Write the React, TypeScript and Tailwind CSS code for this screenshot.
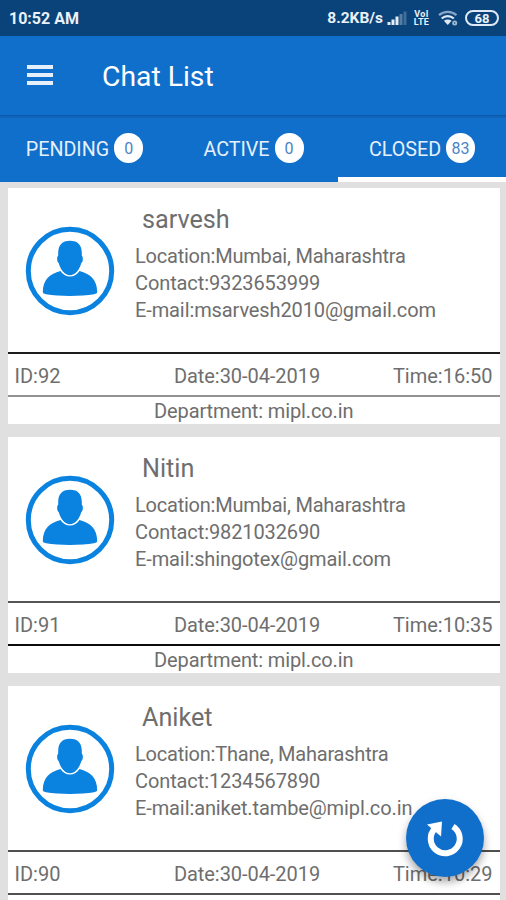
import { clsx } from "clsx";

interface Chat {
  id: number;
  name: string;
  location: string;
  contact: string;
  email: string;
  date: string;
  time: string;
  department: string;
  topRule: string;
  bottomRule: string;
}

const chats: Chat[] = [
  {
    id: 92,
    name: "sarvesh",
    location: "Mumbai, Maharashtra",
    contact: "9323653999",
    email: "msarvesh2010@gmail.com",
    date: "30-04-2019",
    time: "16:50",
    department: "mipl.co.in",
    topRule: "bg-[#1c1c1c]",
    bottomRule: "bg-[#929292]",
  },
  {
    id: 91,
    name: "Nitin",
    location: "Mumbai, Maharashtra",
    contact: "9821032690",
    email: "shingotex@gmail.com",
    date: "30-04-2019",
    time: "10:35",
    department: "mipl.co.in",
    topRule: "bg-[#555555]",
    bottomRule: "bg-[#0c0c0c]",
  },
  {
    id: 90,
    name: "Aniket",
    location: "Thane, Maharashtra",
    contact: "1234567890",
    email: "aniket.tambe@mipl.co.in",
    date: "30-04-2019",
    time: "10:29",
    department: "mipl.co.in",
    topRule: "bg-[#505050]",
    bottomRule: "bg-[#505050]",
  },
];

const tabs = [
  { label: "PENDING", count: 0, active: false },
  { label: "ACTIVE", count: 0, active: false },
  { label: "CLOSED", count: 83, active: true },
];

function SignalIcon() {
  return (
    <svg width="20" height="14" viewBox="0 0 20 14" fill="#e4edf7">
      <rect x="0.5" y="11" width="3" height="3" />
      <rect x="4.5" y="8.5" width="3" height="5.5" />
      <rect x="8.5" y="5.5" width="3" height="8.5" />
      <rect x="12.5" y="3" width="3" height="11" opacity="0.35" />
      <rect x="16.5" y="0.5" width="3" height="13.5" opacity="0.25" />
    </svg>
  );
}

function WifiIcon() {
  return (
    <svg width="20" height="16" viewBox="0 0 20 16" fill="none" stroke="#dfe9f5" strokeWidth="2.2">
      <path d="M1 5.2C6 0.8 13.5 0.8 18.5 5.2" opacity="0.6" />
      <path d="M3.7 8.5C7.2 5.2 12.3 5.2 15.8 8.5" />
      <path d="M5.9 10.8C8.2 9 11.3 9 13.6 10.8L9.75 15Z" fill="#dfe9f5" stroke="none" />
      <circle cx="16.7" cy="13" r="1.6" strokeWidth="1.8" opacity="0.7" />
    </svg>
  );
}

function StatusBar() {
  return (
    <div className="flex h-9 shrink-0 items-center justify-between bg-[#0a437a] pr-[7px] pl-[9px] text-[#eaf1f9]">
      <span className="pt-[2px] text-[16px] leading-none font-bold">10:52 AM</span>
      <div className="flex items-center">
        <span className="pt-[2px] text-[15.5px] leading-none font-bold">8.2KB/s</span>
        <span className="ml-[4px]"><SignalIcon /></span>
        <span className="ml-[6px] flex w-[17px] flex-col items-center text-[9px] leading-[8px] font-bold tracking-[0.3px]">
          <span>VoI</span>
          <span>LTE</span>
        </span>
        <span className="ml-[8px]"><WifiIcon /></span>
        <span className="ml-[7px] flex h-[16px] w-[34px] items-center justify-center rounded-full border-2 border-[#dfe9f5] text-[13px] leading-none font-bold">
          68
        </span>
      </div>
    </div>
  );
}

function AppBar() {
  return (
    <header className="flex h-[79px] shrink-0 items-center bg-[#116fcc] pl-[27px] text-white">
      <button aria-label="Menu" className="flex w-[26px] flex-col gap-[4px] pb-[1px]">
        <span className="h-[4px] bg-[#e6f0fa]" />
        <span className="h-[4px] bg-[#e6f0fa]" />
        <span className="h-[4px] bg-[#e6f0fa]" />
      </button>
      <h1 className="ml-[49px] pt-[4px] text-[28.3px] leading-none">Chat List</h1>
    </header>
  );
}

function TabBar() {
  return (
    <nav className="grid h-[66.5px] shrink-0 grid-cols-[169px_169px_168px] bg-[#116fcc] bg-linear-to-b from-[#0c59a8] to-[#116fcc] to-[4px]">
      {tabs.map((tab) => (
        <button
          key={tab.label}
          className={clsx(
            "flex items-center justify-center border-b-[5px] text-[19.7px] leading-none text-[#e6f0fa]",
            tab.active ? "border-white" : "border-transparent",
          )}
        >
          <span className="pt-[8px]">{tab.label}</span>
          <span className="mt-[5px] ml-[5px] flex h-[30px] w-[29px] items-center justify-center rounded-full bg-white pt-[2px] text-[16px] text-[#4a83c6]">
            {tab.count}
          </span>
        </button>
      ))}
    </nav>
  );
}

function Avatar() {
  return (
    <svg width="90" height="90" viewBox="0 0 90 90" className="shrink-0">
      <circle cx="45" cy="45" r="41.7" fill="none" stroke="#0a82df" strokeWidth="5" />
      <path
        d="M17.8 66C18 53 25 48 35.5 45C37.5 48.5 41 50.500 45 50.500C49 50.500 52.500 48.500 54.500 45C65 48 72 53 72.200 66C72 67.500 71 67.700 69 68.200C56 70.500 34 70.500 21 68.200C19 67.700 18 67.500 17.800 66Z"
        fill="#0a82df"
      />
      <path
        d="M45 14.700C53 14.700 56.800 19 56.800 27L56.800 29.500C58.500 31.500 58 36 56.300 37C54.500 44 50 49.300 45 49.300C40 49.300 35.500 44 33.700 37C32 36 31.500 31.500 33.200 29.500L33.200 27C33.200 19 37 14.700 45 14.700Z"
        fill="#0a82df"
      />
    </svg>
  );
}

function ChatCard({ chat }: { chat: Chat }) {
  return (
    <article className="h-[236px] shrink-0 bg-white text-[20px] text-[#6e6e6e]">
      <div className="flex h-[164px] pl-[17.5px]">
        <div className="pt-[37.5px]">
          <Avatar />
        </div>
        <div className="pl-[20px] whitespace-nowrap">
          <h2 className="mt-[17px] pl-[7px] text-[25.2px] leading-[30px]">{chat.name}</h2>
          <div className="mt-[8px] leading-[27px] tracking-[-0.11px]">
            <p className="tracking-[-0.22px]">Location:{chat.location}</p>
            <p>Contact:{chat.contact}</p>
            <p>E-mail:{chat.email}</p>
          </div>
        </div>
      </div>
      <div className={clsx("h-[2px]", chat.topRule)} />
      <div className="grid h-[41px] grid-cols-[154px_157px_167px] items-center px-[7px] pt-[3px] leading-none">
        <span>ID:{chat.id}</span>
        <span className="text-center tracking-[-0.05px]">Date:{chat.date}</span>
        <span className="text-right">Time:{chat.time}</span>
      </div>
      <div className={clsx("h-[2px]", chat.bottomRule)} />
      <p className="h-[27px] text-center leading-[29px] tracking-[-0.12px]">Department: {chat.department}</p>
    </article>
  );
}

function RefreshButton() {
  return (
    <button
      aria-label="Refresh"
      className="absolute top-[799px] left-[406px] size-[78px] rounded-full bg-[#116fcc] shadow-[0_5px_9px_rgba(0,0,0,0.35)]"
    >
      <svg width="78" height="78" viewBox="0 0 78 78" fill="none">
        <path d="M47 27.5A14.5 14.5 0 1 1 28.8 29.7" stroke="#fff" strokeWidth="6" />
        <path d="M21 25.500L36 22.500L35 37.500Z" fill="#fff" />
      </svg>
    </button>
  );
}

export default function App() {
  return (
    <div className="relative flex h-[900px] w-[506px] flex-col overflow-hidden bg-[#e0e0e0] font-[Roboto,sans-serif]">
      <StatusBar />
      <AppBar />
      <TabBar />
      <main className="flex min-h-0 flex-1 flex-col gap-[13px] overflow-hidden pt-[6.5px] pr-[6px] pl-[7.5px]">
        {chats.map((chat) => (
          <ChatCard key={chat.id} chat={chat} />
        ))}
      </main>
      <RefreshButton />
    </div>
  );
}
